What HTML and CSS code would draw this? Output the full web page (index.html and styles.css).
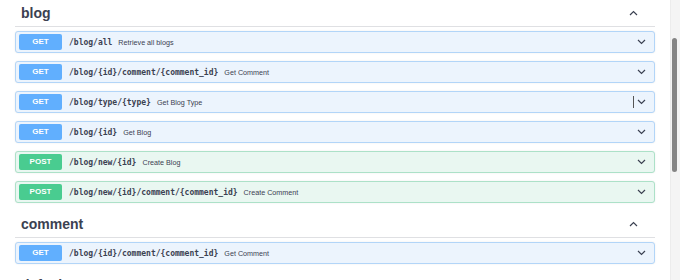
FILE: index.html
```html
<!DOCTYPE html>
<html lang="en">
<head>
  <meta charset="UTF-8">
  <title>FastAPI - Swagger UI</title>
  <link rel="stylesheet" href="styles.css">
</head>
<body>
  <div class="page">
    <div class="content">

      <div class="tag">
        <div class="tag-head">
          <span class="tag-name">blog</span>
          <svg class="arrow-up" width="9" height="6" viewBox="0 0 9 6"><path d="M1 5 L4.5 1.5 L8 5" fill="none" stroke="#3b4151" stroke-width="1.2"/></svg>
        </div>
        <div class="op get">
          <span class="method">GET</span>
          <span class="path">/blog/all</span>
          <span class="summary">Retrieve all blogs</span>
          <svg class="arrow-down" width="9" height="6" viewBox="0 0 9 6"><path d="M1 1 L4.5 4.5 L8 1" fill="none" stroke="#3b4151" stroke-width="1.2"/></svg>
        </div>
        <div class="op get">
          <span class="method">GET</span>
          <span class="path">/blog/{id}/comment/{comment_id}</span>
          <span class="summary">Get Comment</span>
          <svg class="arrow-down" width="9" height="6" viewBox="0 0 9 6"><path d="M1 1 L4.5 4.5 L8 1" fill="none" stroke="#3b4151" stroke-width="1.2"/></svg>
        </div>
        <div class="op get">
          <span class="method">GET</span>
          <span class="path">/blog/type/{type}</span>
          <span class="summary">Get Blog Type</span>
          <span class="caret"></span>
          <svg class="arrow-down" width="9" height="6" viewBox="0 0 9 6"><path d="M1 1 L4.5 4.5 L8 1" fill="none" stroke="#3b4151" stroke-width="1.2"/></svg>
        </div>
        <div class="op get">
          <span class="method">GET</span>
          <span class="path">/blog/{id}</span>
          <span class="summary">Get Blog</span>
          <svg class="arrow-down" width="9" height="6" viewBox="0 0 9 6"><path d="M1 1 L4.5 4.5 L8 1" fill="none" stroke="#3b4151" stroke-width="1.2"/></svg>
        </div>
        <div class="op post">
          <span class="method">POST</span>
          <span class="path">/blog/new/{id}</span>
          <span class="summary">Create Blog</span>
          <svg class="arrow-down" width="9" height="6" viewBox="0 0 9 6"><path d="M1 1 L4.5 4.5 L8 1" fill="none" stroke="#3b4151" stroke-width="1.2"/></svg>
        </div>
        <div class="op post">
          <span class="method">POST</span>
          <span class="path">/blog/new/{id}/comment/{comment_id}</span>
          <span class="summary">Create Comment</span>
          <svg class="arrow-down" width="9" height="6" viewBox="0 0 9 6"><path d="M1 1 L4.5 4.5 L8 1" fill="none" stroke="#3b4151" stroke-width="1.2"/></svg>
        </div>
      </div>

      <div class="tag">
        <div class="tag-head">
          <span class="tag-name">comment</span>
          <svg class="arrow-up" width="9" height="6" viewBox="0 0 9 6"><path d="M1 5 L4.5 1.5 L8 5" fill="none" stroke="#3b4151" stroke-width="1.2"/></svg>
        </div>
        <div class="op get">
          <span class="method">GET</span>
          <span class="path">/blog/{id}/comment/{comment_id}</span>
          <span class="summary">Get Comment</span>
          <svg class="arrow-down" width="9" height="6" viewBox="0 0 9 6"><path d="M1 1 L4.5 4.5 L8 1" fill="none" stroke="#3b4151" stroke-width="1.2"/></svg>
        </div>
      </div>

      <div class="tag">
        <div class="tag-head">
          <span class="tag-name">default</span>
        </div>
      </div>

    </div>
    <div class="scrollbar">
      <div class="thumb"></div>
    </div>
  </div>
</body>
</html>
```

FILE: styles.css
```css
html, body {
  margin: 0;
  padding: 0;
  height: 280px;
  overflow: hidden;
  background: #fff;
}
body {
  font-family: "Liberation Sans", Arial, sans-serif;
  color: #3b4151;
}
.page {
  display: flex;
  height: 280px;
}
.content {
  width: 640px;
  padding-left: 15px;
  padding-right: 15px;
}
.scrollbar {
  width: 10px;
  background: #f4f4f4;
  border-left: 1px solid #ececec;
  box-sizing: border-box;
  padding-top: 38px;
  padding-left: 1px;
}
.thumb {
  width: 5px;
  height: 134px;
  background: #858585;
  border-radius: 3px;
}
.tag {
  margin-bottom: 8px;
}
.tag-head {
  display: flex;
  align-items: center;
  height: 26px;
  border-bottom: 1px solid #dfe0e3;
  padding-left: 6px;
  padding-right: 17px;
  margin-bottom: 4px;
}
.tag-name {
  flex: 1;
  font-size: 14px;
  font-weight: bold;
  color: #3b4151;
}
.arrow-up {
  display: block;
}
.op {
  display: flex;
  align-items: center;
  height: 20px;
  margin-bottom: 8px;
  padding: 0 8px 0 3px;
  border: 1px solid;
  border-radius: 3px;
  box-shadow: 0 0 2px rgba(0, 0, 0, 0.08);
}
.op.get {
  background: #ecf4fd;
  border-color: #b2d5f8;
}
.op.post {
  background: #e9f7f1;
  border-color: #ace1c8;
}
.method {
  width: 43px;
  height: 16px;
  line-height: 16px;
  border-radius: 2px;
  text-align: center;
  color: #fff;
  font-size: 8px;
  font-weight: bold;
}
.get .method {
  background: #61affe;
}
.post .method {
  background: #49cc90;
}
.path {
  margin-left: 7px;
  font-family: "DejaVu Sans Mono", "Liberation Mono", monospace;
  font-size: 8px;
  font-weight: bold;
  color: #3b4151;
}
.summary {
  flex: 1;
  margin-left: 6px;
  font-size: 7.2px;
  color: #3b4151;
}
.caret {
  width: 1px;
  height: 12px;
  background: #555;
  margin-right: 3px;
}
.arrow-down {
  display: block;
}
```
